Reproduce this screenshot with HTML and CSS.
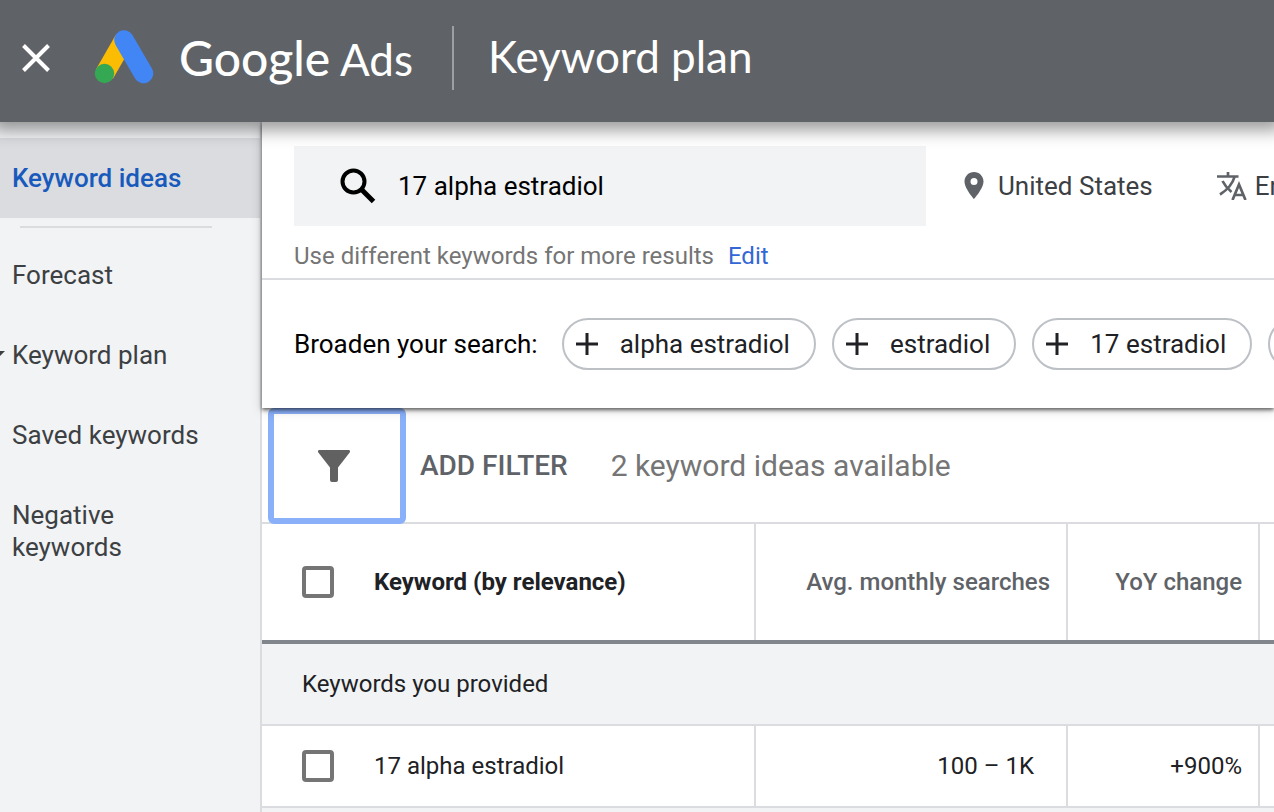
FILE: index.html
```html
<!DOCTYPE html>
<html lang="en">
<head>
    <meta charset="utf-8">
    <title>Keyword plan - Google Ads</title>
    <link rel="stylesheet" href="styles.css">
</head>

<body>
    <header class="topbar">
        <button class="close" type="button" aria-label="Close">
            <svg width="28" height="28" viewBox="0 0 28 28"><path d="M1.5 1.5l25 25M26.5 1.5l-25 25" stroke="#fff" stroke-width="4"/></svg>
        </button>
        <a class="brand" href="#">
            <svg width="60" height="58" viewBox="0 0 60 58">
                <path d="M10.5 45L30 11" stroke="#fbbc04" stroke-width="19.5"/>
                <path d="M30 11l19.5 33.5" stroke="#4285f4" stroke-width="19.5" stroke-linecap="round"/>
                <circle cx="10.5" cy="44.5" r="9.7" fill="#34a853"/>
            </svg>
            <span class="brand-name"><span class="brand-google">Google</span> Ads</span>
        </a>
        <h1 class="page-title">Keyword plan</h1>
    </header>

    <div class="layout">
        <nav class="sidebar">
            <a class="nav-item active" href="#">Keyword ideas</a>
            <hr class="nav-divider">
            <a class="nav-item" href="#">Forecast</a>
            <a class="nav-item" href="#">
                <svg class="nav-arrow" width="20" height="10" viewBox="0 0 20 10"><path d="M0 0h20L10 10z" fill="#3c4043"/></svg>
                Keyword plan
            </a>
            <a class="nav-item" href="#">Saved keywords</a>
            <a class="nav-item" href="#">Negative keywords</a>
        </nav>

        <main class="content">
            <section class="search-card">
                <div class="search-part">
                    <div class="search-row">
                        <div class="search-box">
                            <label for="keywords" aria-label="Keywords">
                                <svg width="36" height="36" viewBox="0 0 36 36" fill="none" stroke="#000" stroke-width="4"><circle cx="13.5" cy="13.5" r="11"/><path d="M21.5 21.5L33.5 33.5" stroke-width="5"/></svg>
                            </label>
                            <input type="text" id="keywords" value="17 alpha estradiol">
                        </div>
                        <button class="option" type="button">
                            <svg class="option-pin" width="20" height="28" viewBox="0 0 20 28"><path fill-rule="evenodd" d="M10 0C4.7 0 .5 4.2.5 9.5.5 16.5 10 27 10 27s9.5-10.5 9.5-17.5C19.5 4.2 15.3 0 10 0zm0 13a3.5 3.5 0 1 1 0-7 3.5 3.5 0 0 1 0 7z" fill="#5f6368"/></svg>
                            United States
                        </button>
                        <button class="option" type="button">
                            <svg width="30" height="28" viewBox="0 0 30 28" fill="none" stroke="#5f6368" stroke-width="2.7"><path d="M0 4.5h21.5M11 0v5M17.5 5C15.5 12 10 18 3 22.5M5.5 9C8 14 11 17 14.5 20"/><path d="M15.5 28L22 12.5 28.5 28M17.5 23h9"/></svg>
                            English
                        </button>
                    </div>
                    <p class="hint">Use different keywords for more results <a href="#">Edit</a></p>
                </div>

                <div class="broaden">
                    <span class="broaden-label">Broaden your search:</span>
                    <button class="chip" type="button">
                        <svg width="22" height="22" viewBox="0 0 22 22"><path d="M11 0v22M0 11h22" stroke="#202124" stroke-width="3"/></svg>
                        alpha estradiol
                    </button>
                    <button class="chip" type="button">
                        <svg width="22" height="22" viewBox="0 0 22 22"><path d="M11 0v22M0 11h22" stroke="#202124" stroke-width="3"/></svg>
                        estradiol
                    </button>
                    <button class="chip" type="button">
                        <svg width="22" height="22" viewBox="0 0 22 22"><path d="M11 0v22M0 11h22" stroke="#202124" stroke-width="3"/></svg>
                        17 estradiol
                    </button>
                    <button class="chip" type="button" aria-label="More keywords">
                        <svg width="22" height="22" viewBox="0 0 22 22"><path d="M11 0v22M0 11h22" stroke="#202124" stroke-width="3"/></svg>
                    </button>
                </div>
            </section>

            <div class="filter-bar">
                <button class="filter-icon" type="button" aria-label="Filter">
                    <svg width="32" height="32" viewBox="0 0 32 32"><path d="M1.5 0h29C32 0 32.5 1.6 31.5 2.8L20 17.5V30a2 2 0 0 1-2 2h-4a2 2 0 0 1-2-2V17.5L.5 2.8C-.5 1.6 0 0 1.5 0z" fill="#616161"/></svg>
                </button>
                <button class="add-filter" type="button">ADD FILTER</button>
                <span class="idea-count">2 keyword ideas available</span>
            </div>

            <table class="ideas">
                <thead>
                    <tr>
                        <th class="col-keyword"><div class="keyword-cell"><input type="checkbox" id="all"><label for="all">Keyword (by relevance)</label></div></th>
                        <th class="col-searches">Avg. monthly searches</th>
                        <th class="col-yoy">YoY change</th>
                        <th></th>
                    </tr>
                </thead>
                <tbody>
                    <tr class="group-row">
                        <td colspan="4">Keywords you provided</td>
                    </tr>
                    <tr>
                        <td><div class="keyword-cell"><input type="checkbox" id="kw1"><label for="kw1">17 alpha estradiol</label></div></td>
                        <td class="searches">100 – 1K</td>
                        <td>+900%</td>
                        <td></td>
                    </tr>
                </tbody>
            </table>
        </main>
    </div>
</body>
</html>
```
FILE: styles.css
```css
*{
    box-sizing: border-box;
}
html, body{
    height: 100%;
}
body{
    margin: 0;
    display: flex;
    flex-direction: column;
    overflow: hidden;
    font-family: Roboto, "Liberation Sans", sans-serif;
    font-size: 26px;
    line-height: 32px;
    color: #202124;
    background-color: #f1f3f4;
}
button, input{
    font: inherit;
    color: inherit;
    margin: 0;
    padding: 0;
    border: none;
    background: none;
}
a{
    color: inherit;
    text-decoration: none;
}
svg{
    display: block;
    flex-shrink: 0;
}

/* top bar */
.topbar{
    position: relative;
    z-index: 3;
    flex-shrink: 0;
    display: flex;
    align-items: center;
    padding: 26px 22px 32px;
    background-color: #5f6368;
    color: #fff;
    box-shadow: 0 0 16px 8px rgba(0, 0, 0, 0.4);
}
.close{
    margin-right: 44px;
}
.brand{
    display: flex;
    align-items: center;
    gap: 25px;
    margin-right: 39px;
}
.brand-name, .page-title{
    font-family: Lato, "Open Sans", sans-serif;
    font-size: 44px;
    line-height: 60px;
    white-space: nowrap;
}
.brand-google{
    font-size: 48px;
    font-weight: 500;
}
.page-title{
    margin: 0;
    padding: 0 0 4px 34px;
    border-left: 2px solid #9aa0a6;
    font-weight: 400;
}

/* side navigation */
.layout{
    flex: 1;
    display: flex;
    min-height: 0;
}
.sidebar{
    flex: 0 0 262px;
    padding-top: 16px;
    border-right: 2px solid #dadce0;
}
.nav-item{
    display: flex;
    align-items: center;
    padding: 24px 48px 24px 12px;
    color: #3c4043;
}
.nav-item.active{
    background-color: #dadce0;
    color: #185abc;
    font-weight: 500;
}
.nav-arrow{
    margin: 2px 7px 0 -27px;
}
.nav-divider{
    margin: 8px 48px 7px 20px;
    border: none;
    border-top: 2px solid #dadce0;
}

/* search */
.content{
    flex: 1;
    min-width: 0;
}
.search-card{
    position: relative;
    z-index: 1;
    background-color: #fff;
    box-shadow: 0 2px 4px rgba(0, 0, 0, 0.6), 0 2px 12px rgba(0, 0, 0, 0.15);
}
.search-part{
    padding: 24px 0 6px 32px;
    border-bottom: 2px solid #dadce0;
}
.search-row{
    display: flex;
    overflow: hidden;
}
.search-box{
    flex: 0 0 632px;
    display: flex;
    align-items: center;
    gap: 22px;
    height: 80px;
    padding: 0 46px;
    background-color: #f1f3f4;
    color: #000;
}
.search-box input{
    flex: 1;
    min-width: 0;
    outline: none;
}
.option{
    flex-shrink: 0;
    display: flex;
    align-items: center;
    gap: 8px;
    margin-left: 28px;
    color: #3c4043;
    white-space: nowrap;
}
.option + .option{
    margin-left: 64px;
}
.option-pin{
    margin: 0 6px 0 10px;
}
.hint{
    margin: 14px 0 0;
    font-size: 24px;
    color: #757575;
}
.hint a{
    margin-left: 8px;
    color: #3367d6;
}
.broaden{
    display: flex;
    align-items: center;
    gap: 16px;
    padding: 38px 0 38px 32px;
    overflow: hidden;
    white-space: nowrap;
}
.broaden-label{
    margin-right: 8px;
    color: #000;
}
.chip{
    flex-shrink: 0;
    display: flex;
    align-items: center;
    gap: 22px;
    height: 52px;
    padding: 0 24px 0 12px;
    border: 2px solid #bdc1c6;
    border-radius: 26px;
}

/* filter */
.filter-bar{
    display: flex;
    align-items: center;
    padding: 2px 0 0 6px;
    height: 116px;
    border-bottom: 2px solid #dadce0;
    background-color: #fff;
    white-space: nowrap;
}
.filter-icon{
    display: flex;
    align-items: center;
    justify-content: center;
    width: 138px;
    height: 116px;
    margin-right: 14px;
    padding-right: 6px;
    border: 6px solid #8ab0fa;
    border-radius: 6px;
}
.add-filter{
    margin-right: 43px;
    color: #5f6368;
    font-size: 28px;
    font-weight: 500;
}
.idea-count{
    font-size: 30px;
    color: #757575;
}

/* keyword table */
.ideas{
    width: 100%;
    table-layout: fixed;
    border-collapse: separate;
    border-spacing: 0;
    font-size: 24px;
    background-color: #fff;
}
.ideas th, .ideas td{
    height: 82px;
    padding: 0 16px;
    border-right: 2px solid #dadce0;
    border-bottom: 2px solid #dadce0;
    text-align: right;
    font-weight: 400;
}
.ideas th{
    height: 116px;
    border-bottom: none;
    color: #5f6368;
    font-weight: 500;
}
.ideas th:first-child, .ideas td:first-child{
    padding-left: 40px;
    text-align: left;
}
.ideas th:first-child{
    color: #202124;
    font-weight: 700;
}
.ideas th:last-child, .ideas td:last-child{
    border-right: none;
}
.ideas .group-row td{
    height: 86px;
    border-top: 4px solid #80868b;
    background-color: #f1f3f4;
}
.ideas .searches{
    padding-right: 32px;
}
.col-keyword{
    width: 494px;
}
.col-searches{
    width: 312px;
}
.col-yoy{
    width: 192px;
}
.keyword-cell{
    display: flex;
    align-items: center;
    gap: 40px;
}
.keyword-cell input{
    appearance: none;
    width: 32px;
    height: 32px;
    border: 4px solid #757575;
    border-radius: 4px;
    background-color: #fff;
}
```
